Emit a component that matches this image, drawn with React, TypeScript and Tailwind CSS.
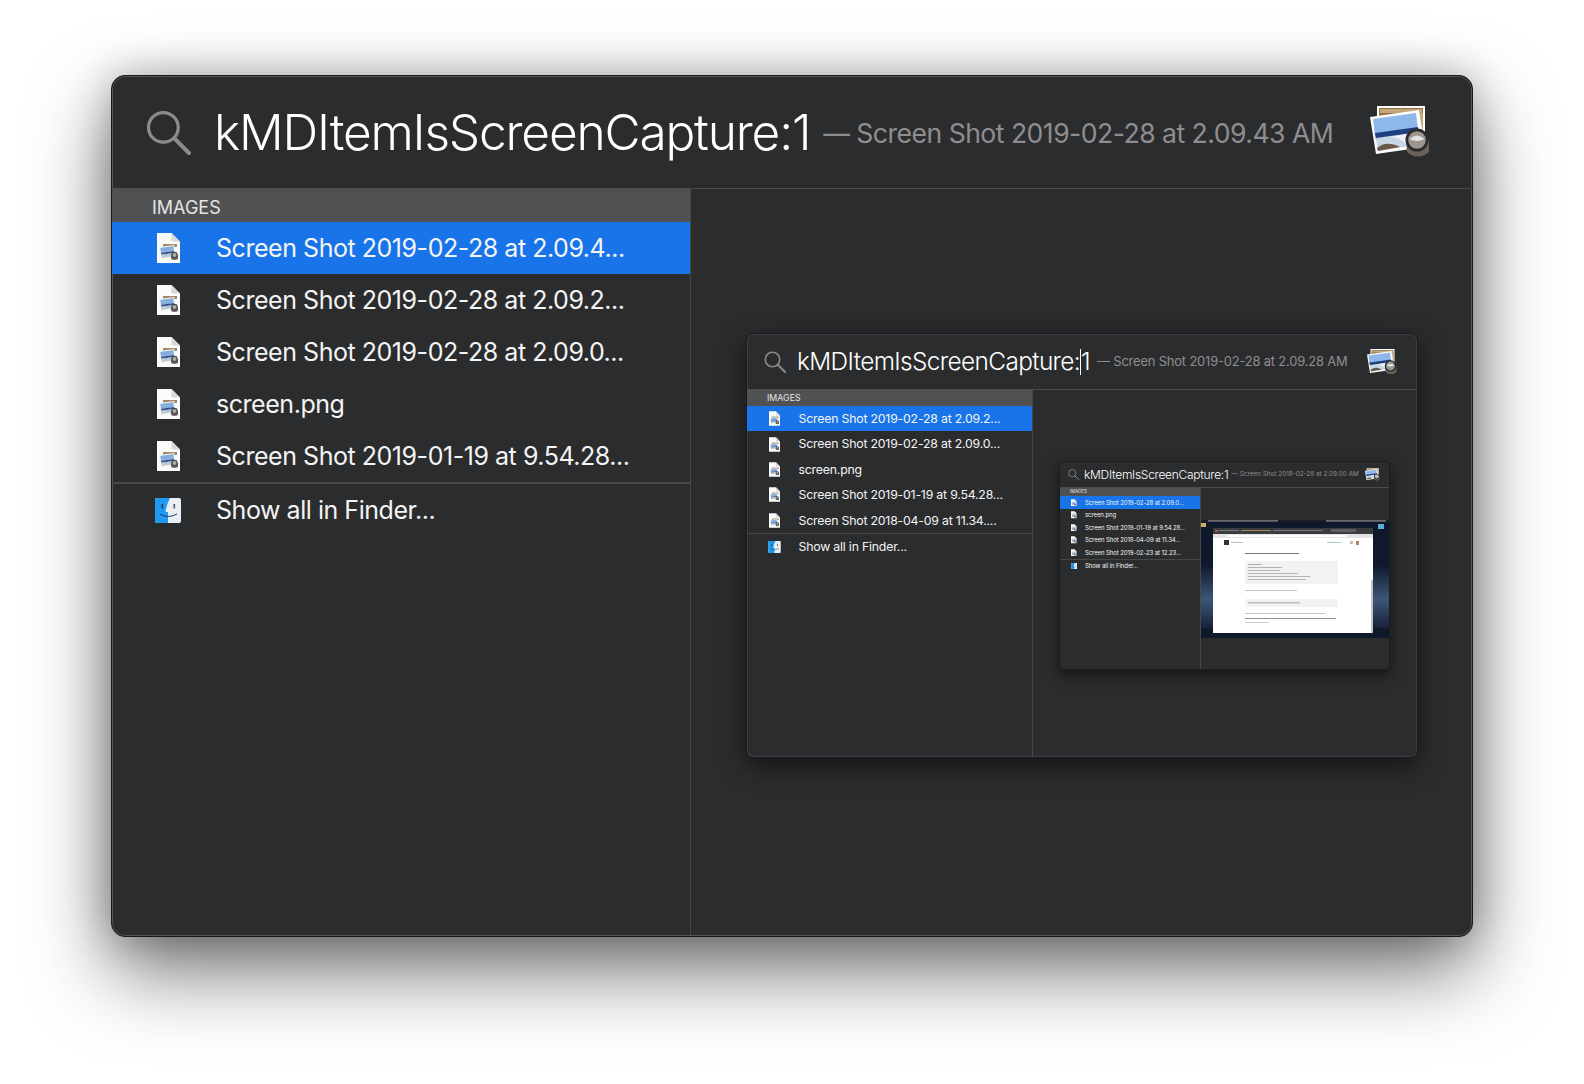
const rows = {
  1: ["Screen Shot 2019-02-28 at 2.09.4...", "Screen Shot 2019-02-28 at 2.09.2...", "Screen Shot 2019-02-28 at 2.09.0...", "screen.png", "Screen Shot 2019-01-19 at 9.54.28..."],
  2: ["Screen Shot 2019-02-28 at 2.09.2...", "Screen Shot 2019-02-28 at 2.09.0...", "screen.png", "Screen Shot 2019-01-19 at 9.54.28...", "Screen Shot 2018-04-09 at 11.34...."],
  3: ["Screen Shot 2019-02-28 at 2.09.0...", "screen.png", "Screen Shot 2019-01-19 at 9.54.28...", "Screen Shot 2018-04-09 at 11.34...", "Screen Shot 2019-02-23 at 12.23..."],
};

const subtitles = {
  1: "— Screen Shot 2019-02-28 at 2.09.43 AM",
  2: "— Screen Shot 2019-02-28 at 2.09.28 AM",
  3: "— Screen Shot 2018-02-28 at 2.09.00 AM",
};

const sizes = {
  1: {
    win: "w-[1362px] h-[862px] rounded-[14px] border border-[#16171a] shadow-[0_34px_80px_rgba(0,0,0,0.55),0_0_40px_rgba(0,0,0,0.25),inset_0_0_0_1px_#55565a]",
    header: "h-[113px] pl-[34px] pr-[42px]",
    glass: "w-[45px] h-[45px]",
    title: "ml-[23px] text-[49.6px] tracking-[-1.18px]",
    sub: "ml-[13px] pt-[3px] text-[26.6px] tracking-[-0.53px]",
    bigIcon: "w-[60px] h-[52px]",
    sidebar: "w-[579px]",
    section: "h-[33px] pt-[3px] pl-[40px] text-[18px]",
    row: "h-[52px]",
    fileBox: "w-[104px] pl-[45px]",
    file: "w-[23px] h-[30px]",
    finder: "w-[26px] h-[25px] -ml-[2px]",
    text: "pt-[2px] text-[25px] tracking-[-0.46px]",
    line: "h-[2px]",
  },
  2: {
    win: "w-[672px] h-[425px] rounded-[7px] border border-[#1a1b1e] shadow-[0_8px_24px_rgba(0,0,0,0.55),inset_0_0_0_1px_#3e3f43]",
    header: "h-[56px] pl-[17px] pr-[20px]",
    glass: "w-[22px] h-[22px]",
    title: "ml-[11px] text-[24.4px] tracking-[-0.63px]",
    sub: "ml-[7px] text-[12.9px] tracking-[-0.16px]",
    bigIcon: "w-[30px] h-[26px]",
    sidebar: "w-[286px]",
    section: "h-[16px] pl-[20px] text-[8.8px]",
    row: "h-[25.4px]",
    fileBox: "w-[51px] pl-[22px]",
    file: "w-[11px] h-[15px]",
    finder: "w-[13px] h-[12px] -ml-[1px]",
    text: "pl-[0.5px] pt-[1px] text-[12.3px] tracking-[-0.2px]",
    line: "h-[1px]",
  },
  3: {
    win: "w-[331px] h-[209px] rounded-[4px] border border-[#1c1d20] shadow-[0_5px_14px_rgba(0,0,0,0.55)]",
    header: "h-[26px] pl-[8px] pr-[9px]",
    glass: "w-[11px] h-[11px]",
    title: "ml-[5px] text-[12px] tracking-[-0.28px]",
    sub: "ml-[3px] text-[6.4px]",
    bigIcon: "w-[15px] h-[13px]",
    sidebar: "w-[141px]",
    section: "h-[8px] pl-[10px] text-[4.4px]",
    row: "h-[12.5px]",
    fileBox: "w-[25px] pl-[11px]",
    file: "w-[5.5px] h-[7.5px]",
    finder: "w-[6.5px] h-[6px] -ml-[0.5px]",
    text: "text-[6px] tracking-[-0.09px]",
    line: "h-[1px]",
  },
};

function Glass({ className }: { className: string }) {
  return (
    <svg viewBox="0 0 44 44" className={className} fill="none" stroke="#8b8b8d">
      <circle cx="17" cy="17" r="14.5" strokeWidth="3.2" />
      <path d="M27.5 27.5 L42 42" strokeWidth="4" strokeLinecap="round" />
    </svg>
  );
}

function FileIcon({ className }: { className: string }) {
  return (
    <svg viewBox="0 0 23 30" className={className}>
      <path d="M0 0 H14.5 L23 8.5 V30 H0 Z" fill="#fbfbfb" />
      <path d="M14.5 0 V8.5 H23 Z" fill="#d8d8da" />
      <rect x="6" y="11" width="14" height="3" fill="#a28a62" />
      <g transform="rotate(-8 10 19)">
        <rect x="3" y="13" width="15" height="12" fill="#eef0f2" />
        <rect x="4" y="14" width="13" height="5" fill="#84aee0" />
        <rect x="4" y="19" width="13" height="2" fill="#33558f" />
        <rect x="4" y="21" width="13" height="3" fill="#b9c7d6" />
      </g>
      <path d="M14 22 H21 V26 Q17.5 28 14 26 Z" fill="#6a6660" />
      <circle cx="17.5" cy="22" r="3.2" fill="#4a4846" />
      <circle cx="17.5" cy="22" r="2" fill="#a9aeb4" />
    </svg>
  );
}

function PreviewIcon({ className }: { className: string }) {
  return (
    <svg viewBox="0 0 60 52" className={className}>
      <rect x="7" y="0" width="48" height="42" fill="#fdfdfd" />
      <rect x="9" y="2" width="44" height="38" fill="#8f7145" />
      <path d="M10 3 H52 V7 H10 Z M49 7 H53 V30 H49 Z" fill="#c2a877" />
      <polygon points="0,11 49,4 55,41 6,48" fill="#fbfbfb" />
      <polygon points="3,13 46,7 48,24 5,30" fill="#8fb8ea" />
      <polygon points="5,27 48,21 49,28 6,34" fill="#1f3f80" />
      <polygon points="6,32 49,26 52,38 8,45" fill="#c6d6e4" />
      <path d="M20 31 Q30 31 36 38 L50 36 L49 26 Z" fill="#eef3f6" />
      <path d="M7 42 Q16 34 30 41 L8 45 Z" fill="#6b5a48" />
      <path d="M36 34 H59 V46 Q48 55 37 46 Z" fill="#6b6257" />
      <circle cx="47" cy="34" r="11.5" fill="#2a2a2c" />
      <circle cx="47" cy="34" r="8.8" fill="#9c968d" />
      <path d="M39.5 33 Q47 26 54.5 33 Q47 37 39.5 33 Z" fill="#dfe3e8" />
    </svg>
  );
}

function FinderIcon({ className }: { className: string }) {
  return (
    <svg viewBox="0 0 26 25" className={className}>
      <rect width="26" height="25" rx="2" fill="#e9eff5" />
      <path d="M2 0 H15 Q11 8 10.5 14 H13 V25 H2 Q0 25 0 23 V2 Q0 0 2 0 Z" fill="#1e9bf0" />
      <path d="M5 16 Q13 21 22 16" fill="none" stroke="#1d3d63" strokeWidth="1" />
      <rect x="6.5" y="6" width="1.6" height="4.5" fill="#123a66" />
      <rect x="18.5" y="6" width="1.6" height="4.5" fill="#4a5a6e" />
    </svg>
  );
}

// the desktop picture shown at the deepest level
function DesktopShot() {
  return (
    <svg viewBox="0 0 188 118" className="w-[188px] h-[118px] block">
      <defs>
        <linearGradient id="hill" x1="0" y1="0" x2="0" y2="1">
          <stop offset="0" stopColor="#10182c" />
          <stop offset="0.55" stopColor="#3d5677" />
          <stop offset="1" stopColor="#17223a" />
        </linearGradient>
      </defs>
      <rect width="188" height="118" fill="#10182c" />
      <path d="M0 46 Q20 44 40 60 Q120 60 150 52 Q170 40 188 48 V108 H0 Z" fill="url(#hill)" />
      <rect width="188" height="2" fill="#1c1e26" />
      <rect x="7" y="0.4" width="70" height="1" fill="#a2a2a8" />
      <rect x="125" y="0.4" width="60" height="1" fill="#a2a2a8" />
      <rect x="0" y="3" width="5" height="4" fill="#c9b26a" />
      <rect x="177" y="4" width="6" height="5" fill="#5fa8dc" />
      <rect x="12" y="8" width="160" height="105" fill="#ffffff" />
      <rect x="12" y="8" width="160" height="6" fill="#3a3c40" />
      <rect x="14" y="10" width="3" height="1.5" fill="#d0603e" />
      <rect x="18" y="10" width="20" height="1" fill="#77797e" />
      <rect x="40" y="10" width="30" height="1" fill="#a8874e" />
      <rect x="72" y="10" width="50" height="1" fill="#77797e" />
      <rect x="130" y="9" width="25" height="3" fill="#5c5e63" />
      <rect x="12" y="14" width="160" height="4" fill="#e4e4e6" />
      <rect x="26" y="15" width="120" height="2" fill="#ffffff" />
      <rect x="23" y="20" width="5" height="5" fill="#333" />
      <rect x="30" y="22" width="12" height="1" fill="#bbb" />
      <rect x="126" y="22" width="14" height="1" fill="#9ad4b8" />
      <rect x="149" y="21" width="3" height="3" fill="#bbb" />
      <rect x="155" y="21" width="3" height="4" fill="#a68a6a" />
      <rect x="44" y="33" width="54" height="1" fill="#777" />
      <rect x="44" y="41" width="93" height="23" fill="#f2f2f2" />
      <rect x="47" y="44" width="14" height="0.7" fill="#999" />
      <rect x="47" y="47" width="34" height="0.7" fill="#999" />
      <rect x="47" y="50" width="32" height="0.7" fill="#999" />
      <rect x="47" y="53" width="50" height="0.7" fill="#999" />
      <rect x="47" y="56" width="62" height="0.7" fill="#999" />
      <rect x="47" y="59" width="58" height="0.7" fill="#999" />
      <rect x="44" y="70" width="52" height="0.7" fill="#aaa" />
      <rect x="44" y="79" width="93" height="8" fill="#f2f2f2" />
      <rect x="47" y="82.5" width="52" height="0.7" fill="#888" />
      <rect x="44" y="93" width="80" height="0.7" fill="#aaa" />
      <rect x="44" y="98" width="91" height="0.8" fill="#777" />
      <rect x="44" y="102" width="24" height="0.7" fill="#bbb" />
      <rect x="170" y="60" width="2" height="53" fill="#c4c4c4" />
    </svg>
  );
}

function Spotlight({ level, cursor, children }: { level: 1 | 2 | 3; cursor?: boolean; children?: React.ReactNode }) {
  const s = sizes[level];
  return (
    <div className={"flex flex-col shrink-0 overflow-hidden bg-[#2b2c2e] " + s.win}>
      <div className={"flex items-center shrink-0 border-b border-[#4a4b4d] " + s.header}>
        <Glass className={"shrink-0 " + s.glass} />
        <div className={"font-light text-white whitespace-nowrap " + s.title}>
          kMDItemIsScreenCapture:
          {cursor && <span className="inline-block w-px h-[26px] -mb-[5px] bg-white" />}
          1
        </div>
        <div className={"flex-1 text-[#8e8e90] whitespace-nowrap " + s.sub}>{subtitles[level]}</div>
        <PreviewIcon className={"shrink-0 " + s.bigIcon} />
      </div>
      <div className="flex flex-1 min-h-0">
        <div className={"shrink-0 border-r border-[#47484a] " + s.sidebar}>
          <div className={"flex items-center bg-[#505153] text-[#e4e4e6] " + s.section}>IMAGES</div>
          {rows[level].map((name, i) => (
            <div key={i} className={"flex items-center text-[#f4f4f5] " + s.row + (i === 0 ? " bg-[#1874e8]" : "")}>
              <div className={"shrink-0 flex items-center " + s.fileBox}>
                <FileIcon className={s.file} />
              </div>
              <span className={"whitespace-nowrap " + s.text}>{name}</span>
            </div>
          ))}
          <div className={"bg-[#47484a] " + s.line} />
          <div className={"flex items-center text-[#f4f4f5] " + s.row}>
            <div className={"shrink-0 flex items-center " + s.fileBox}>
              <FinderIcon className={s.finder} />
            </div>
            <span className={"whitespace-nowrap " + s.text}>Show all in Finder...</span>
          </div>
        </div>
        {children}
      </div>
    </div>
  );
}

export default function App() {
  return (
    <div className="h-screen overflow-hidden bg-white flex justify-center pt-[75px] font-['Inter','Liberation_Sans',sans-serif]">
      <Spotlight level={1}>
        <div className="flex-1 pl-[55px] pt-[144px]">
          <Spotlight level={2} cursor>
            <div className="flex-1 pl-[26px] pt-[71px]">
              <Spotlight level={3}>
                <div className="flex-1 pt-[32px]">
                  <DesktopShot />
                </div>
              </Spotlight>
            </div>
          </Spotlight>
        </div>
      </Spotlight>
    </div>
  );
}
